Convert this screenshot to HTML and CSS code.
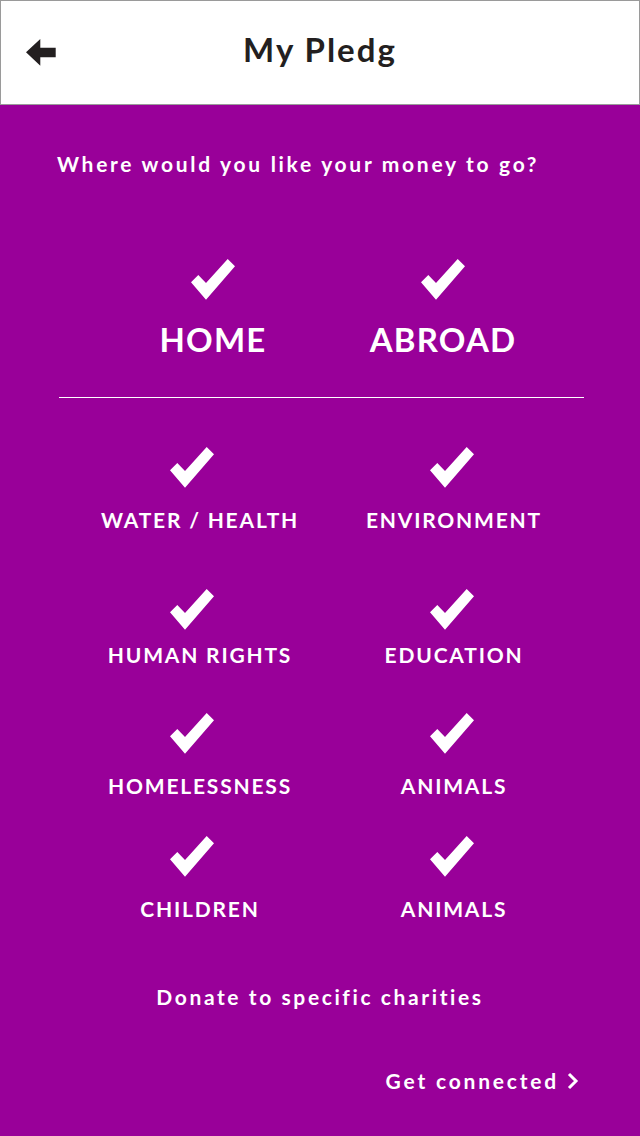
FILE: index.html
```html
<!DOCTYPE html>
<html>
<head>
<meta charset="utf-8">
<link rel="stylesheet" href="styles.css">
</head>
<body>
<div class="app">
  <header class="topbar">
    <svg class="back" width="32" height="30" viewBox="0 0 32 30"><polygon points="0,13.3 14.3,0 14.3,8.7 29.7,8.7 29.7,18.3 14.3,18.3 14.3,26.7" fill="#231f20"/></svg>
    <h1 class="title">My Pledg</h1>
  </header>
  <main class="content">
    <p class="question">Where would you like your money to go?</p>
    <div class="regions">
      <div class="option big">
        <svg class="check" viewBox="0 0 44 41"><polygon points="0,23.3 7.3,16 15,24 36.7,0 44,7.3 15,40.7" fill="#fff"/></svg>
        <span class="label">HOME</span>
      </div>
      <div class="option big">
        <svg class="check" viewBox="0 0 44 41"><polygon points="0,23.3 7.3,16 15,24 36.7,0 44,7.3 15,40.7" fill="#fff"/></svg>
        <span class="label">ABROAD</span>
      </div>
    </div>
    <hr class="divider">
    <div class="causes">
      <div class="option left r1"><svg class="check" viewBox="0 0 44 41"><polygon points="0,23.3 7.3,16 15,24 36.7,0 44,7.3 15,40.7" fill="#fff"/></svg><span class="label">WATER / HEALTH</span></div>
      <div class="option right r1"><svg class="check" viewBox="0 0 44 41"><polygon points="0,23.3 7.3,16 15,24 36.7,0 44,7.3 15,40.7" fill="#fff"/></svg><span class="label">ENVIRONMENT</span></div>
      <div class="option left r2"><svg class="check" viewBox="0 0 44 41"><polygon points="0,23.3 7.3,16 15,24 36.7,0 44,7.3 15,40.7" fill="#fff"/></svg><span class="label">HUMAN RIGHTS</span></div>
      <div class="option right r2"><svg class="check" viewBox="0 0 44 41"><polygon points="0,23.3 7.3,16 15,24 36.7,0 44,7.3 15,40.7" fill="#fff"/></svg><span class="label">EDUCATION</span></div>
      <div class="option left"><svg class="check" viewBox="0 0 44 41"><polygon points="0,23.3 7.3,16 15,24 36.7,0 44,7.3 15,40.7" fill="#fff"/></svg><span class="label">HOMELESSNESS</span></div>
      <div class="option right"><svg class="check" viewBox="0 0 44 41"><polygon points="0,23.3 7.3,16 15,24 36.7,0 44,7.3 15,40.7" fill="#fff"/></svg><span class="label">ANIMALS</span></div>
      <div class="option left"><svg class="check" viewBox="0 0 44 41"><polygon points="0,23.3 7.3,16 15,24 36.7,0 44,7.3 15,40.7" fill="#fff"/></svg><span class="label">CHILDREN</span></div>
      <div class="option right"><svg class="check" viewBox="0 0 44 41"><polygon points="0,23.3 7.3,16 15,24 36.7,0 44,7.3 15,40.7" fill="#fff"/></svg><span class="label">ANIMALS</span></div>
    </div>
    <p class="donate">Donate to specific charities</p>
    <div class="footer">
      <span class="connect">Get connected</span>
      <svg class="chev" width="12" height="18" viewBox="0 0 12 18"><polyline points="2,2 9,9 2,16" fill="none" stroke="#fff" stroke-width="3"/></svg>
    </div>
  </main>
</div>
</body>
</html>
```
FILE: styles.css
```css
html, body {
  margin: 0;
  padding: 0;
}
body {
  background: #990099;
  font-family: "Lato", "Open Sans", sans-serif;
  color: #fff;
}
.app {
  width: 640px;
  height: 1136px;
  display: flex;
  flex-direction: column;
}
.topbar {
  box-sizing: border-box;
  height: 105px;
  background: #fff;
  border: 1px solid #9a9a9a;
  display: flex;
  align-items: center;
  justify-content: center;
  padding-bottom: 8px;
  position: relative;
}
.back {
  position: absolute;
  left: 25px;
  top: 38px;
}
.title {
  margin: 0;
  font-size: 33px;
  font-weight: 700;
  color: #231f20;
  letter-spacing: 2px;
  line-height: 40px;
}
.content {
  flex: 1;
  display: flex;
  flex-direction: column;
}
.question {
  margin: 46px 0 0 57px;
  font-size: 21px;
  font-weight: 700;
  letter-spacing: 2.7px;
  line-height: 26px;
}
.regions {
  display: grid;
  grid-template-columns: 230px 230px;
  justify-content: center;
  margin-top: 82px;
  margin-left: 16px;
}
.option {
  display: flex;
  flex-direction: column;
  align-items: center;
}
.check {
  width: 44px;
  height: 41px;
}
.label {
  font-size: 21px;
  font-weight: 700;
  letter-spacing: 1.8px;
  line-height: 26px;
  margin-top: 19px;
}
.big .label {
  font-size: 33px;
  letter-spacing: 1.2px;
  line-height: 38px;
  margin-top: 20px;
}
.divider {
  border: none;
  border-top: 1px solid #fff;
  width: 525px;
  margin: 39px 0 0 59px;
  height: 0;
}
.causes {
  display: grid;
  grid-template-columns: 254px 254px;
  justify-content: start;
  row-gap: 37px;
  margin-top: 49px;
  padding-left: 73px;
}
.left .check {
  margin-right: 16px;
}
.right .check {
  margin-right: 4px;
}
.option.r1 {
  margin-bottom: 19px;
}
.option.r2 .label {
  margin-top: 12px;
}
.option.r2 {
  margin-bottom: 8px;
}
.donate {
  margin: 62px 0 0 0;
  text-align: center;
  font-size: 21px;
  font-weight: 700;
  letter-spacing: 2.6px;
  line-height: 26px;
}
.footer {
  display: flex;
  justify-content: flex-end;
  align-items: center;
  gap: 8px;
  margin-top: 58px;
  padding-right: 61px;
}
.connect {
  font-size: 21px;
  font-weight: 700;
  letter-spacing: 2.8px;
  line-height: 26px;
}
```
